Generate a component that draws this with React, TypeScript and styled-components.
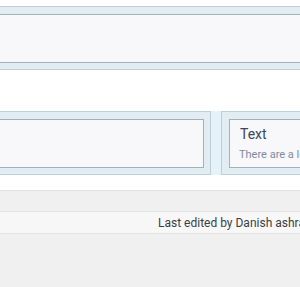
import styled, { createGlobalStyle } from 'styled-components'

const GlobalStyles = createGlobalStyle`
  html, body {
    margin: 0;
    padding: 0;
    background: #f0f0f0;
    overflow: hidden;
  }
  * {
    box-sizing: border-box;
  }
`

function App() {
  return (
    <Page>
      <GlobalStyles />
      <Content>
        <Panel $bleed>
          <PanelBody $height={49} />
        </Panel>

        <ColumnRow>
          <Panel $width={221}>
            <PanelBody $height={49} />
          </Panel>
          <Panel $width={240}>
            <PanelBody $height={49}>
              <CardTitle>Text</CardTitle>
              <CardText>There are a lot of text blocks here</CardText>
            </PanelBody>
          </Panel>
        </ColumnRow>
      </Content>

      <FooterArea>
        <FooterBar>
          <FooterText>Last edited by Danish ashraf on 12/04/2016</FooterText>
        </FooterBar>
      </FooterArea>
    </Page>
  )
}

const Page = styled.div`
  width: 300px;
  height: 287px;
  overflow: hidden;
  display: flex;
  flex-direction: column;
  font-family: Roboto, 'Open Sans', sans-serif;
`

const Content = styled.main`
  background: #ffffff;
  padding: 6px 0 15px;
  border-bottom: 1px solid #e4e4e4;
`

const Panel = styled.div<{ $width?: number; $bleed?: boolean }>`
  flex: 0 0 auto;
  width: ${(p) => (p.$width ? `${p.$width}px` : 'auto')};
  margin: ${(p) => (p.$bleed ? '0 -20px' : '0')};
  background: #e1edf2;
  border: 1px solid #bfcfd7;
  padding: 7px 6px 6px 7px;
`

const PanelBody = styled.div<{ $height: number }>`
  height: ${(p) => p.$height}px;
  background: #f8f8fa;
  border: 1px solid #a1b2ba;
  padding: 6px 9px 0;
  overflow: hidden;
  white-space: nowrap;
`

const ColumnRow = styled.div`
  display: flex;
  gap: 10px;
  margin: 41px 0 0 -10px;
  background: #e5f2f9;
`

const CardTitle = styled.div`
  font-size: 14px;
  line-height: 17px;
  color: #3b4754;
  margin-left: 1px;
`

const CardText = styled.div`
  font-size: 11px;
  line-height: 15px;
  margin-top: 4px;
  color: #7e8ba0;
`

const FooterArea = styled.footer`
  flex: 1;
  background: #f0f0f0;
  padding-top: 20px;
`

const FooterBar = styled.div`
  height: 23px;
  background: #f7f7f7;
  border-top: 1px solid #e3e3e3;
  border-bottom: 1px solid #e3e3e3;
  display: flex;
  align-items: center;
  padding-left: 158px;
  white-space: nowrap;
  overflow: hidden;
`

const FooterText = styled.span`
  font-size: 12px;
  color: #3b3f45;
`

export default App
